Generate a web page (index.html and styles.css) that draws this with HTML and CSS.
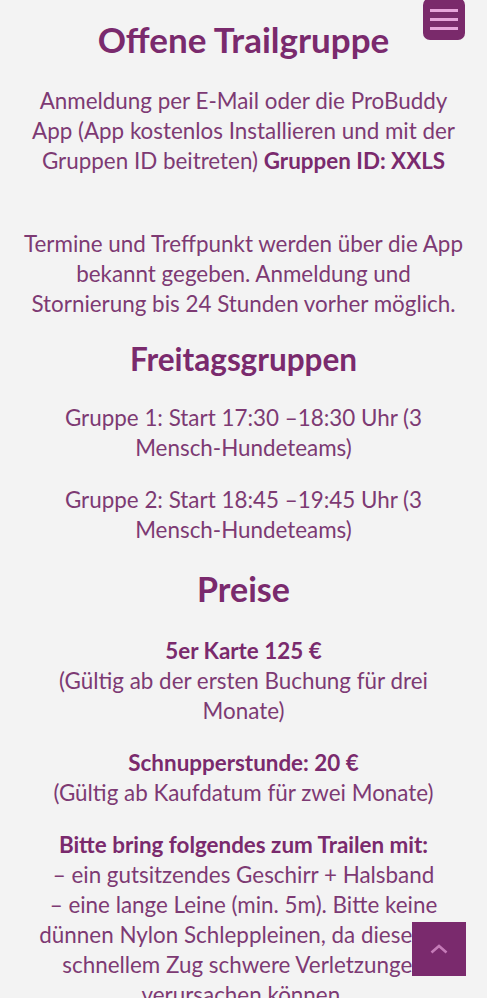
FILE: index.html
```html
<!DOCTYPE html>
<html lang="de">
<head>
    <meta charset="UTF-8">
    <meta name="viewport" content="width=device-width, initial-scale=1.0">
    <title>Offene Trailgruppe</title>
    <link rel="stylesheet" href="styles.css">
</head>
<body>
    <button class="menu-toggle" aria-label="Menü">
        <span></span>
        <span></span>
        <span></span>
    </button>

    <main class="content">
        <h1>Offene Trailgruppe</h1>

        <p class="intro">Anmeldung per E-Mail oder die ProBuddy App (App kostenlos Installieren und mit der Gruppen ID beitreten) <strong>Gruppen ID: XXLS</strong></p>

        <p>Termine und Treffpunkt werden über die App bekannt gegeben. Anmeldung und Stornierung bis 24 Stunden vorher möglich.</p>

        <h2>Freitagsgruppen</h2>
        <p>Gruppe 1: Start 17:30 –18:30 Uhr (3 <span class="nowrap">Mensch-Hundeteams)</span></p>
        <p>Gruppe 2: Start 18:45 –19:45 Uhr (3 <span class="nowrap">Mensch-Hundeteams)</span></p>

        <h2 class="prices">Preise</h2>
        <p><strong>5er Karte 125 €</strong><br>(Gültig ab der ersten Buchung für drei Monate)</p>
        <p><strong>Schnupperstunde: 20 €</strong><br>(Gültig ab Kaufdatum für zwei Monate)</p>
        <p><strong>Bitte bring folgendes zum Trailen mit:</strong><br>– ein gutsitzendes Geschirr + Halsband<br>– eine lange Leine (min. 5m). Bitte keine dünnen Nylon Schleppleinen, da diese bei schnellem Zug schwere Verletzungen verursachen können.</p>
    </main>

    <a href="#" class="scroll-top" aria-label="Nach oben">
        <svg width="18" height="10" viewBox="0 0 18 10">
            <path d="M1.5 8.5 L9 2 L16.5 8.5" fill="none" stroke="#c57bb8" stroke-width="2.6"/>
        </svg>
    </a>
</body>
</html>
```
FILE: styles.css
```css
body {
    margin: 0;
    background-color: #f3f3f3;
    font-family: Lato, "Liberation Sans", sans-serif;
    font-size: 22.4px;
    line-height: 30px;
    color: #7d3a73;
}

.content {
    padding: 18px 22px 0;
    text-align: center;
}

h1 {
    margin: 0 0 26px;
    font-size: 35px;
    line-height: 42px;
    font-weight: 700;
    color: #7a2a6d;
}

h2 {
    margin: 22px 0 26px;
    font-size: 31.5px;
    line-height: 36px;
    font-weight: 700;
    color: #7a2a6d;
}

h2.prices {
    margin: 24px 0 27px;
    font-size: 34px;
    line-height: 40px;
}

p {
    margin: 0 0 22px;
}

p.intro {
    margin-bottom: 53px;
}

strong {
    color: #7a2a6d;
}

.nowrap {
    white-space: nowrap;
}

.menu-toggle {
    position: fixed;
    top: -2px;
    right: 22px;
    width: 42px;
    height: 42px;
    padding: 0;
    border: none;
    border-radius: 7px;
    background-color: #7a2a6b;
    display: flex;
    flex-direction: column;
    justify-content: center;
    align-items: center;
    gap: 6px;
    cursor: pointer;
}

.menu-toggle span {
    display: block;
    width: 28px;
    height: 3px;
    background-color: #e7a4da;
}

.scroll-top {
    position: fixed;
    right: 21px;
    bottom: 22px;
    width: 54px;
    height: 54px;
    background-color: #7a2a6d;
    display: flex;
    justify-content: center;
    align-items: center;
}
```
